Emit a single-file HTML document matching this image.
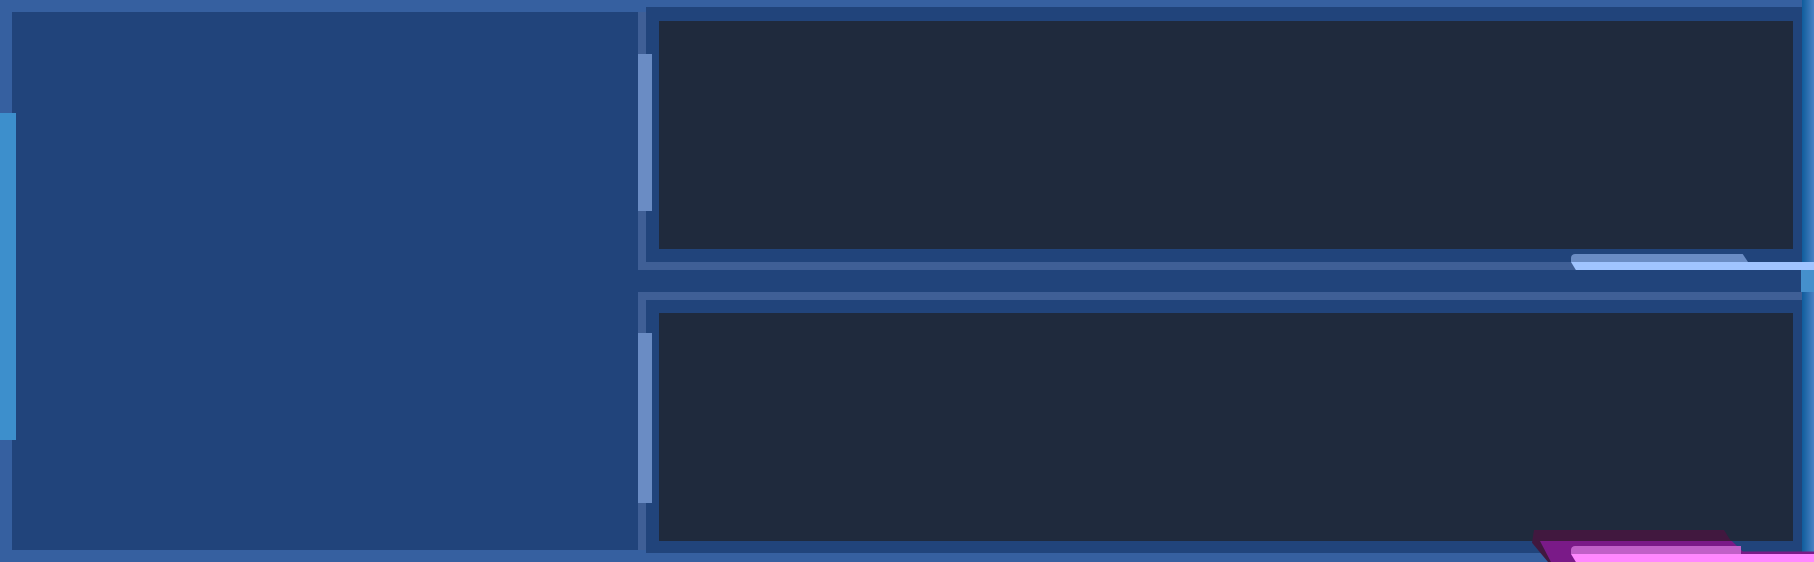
<!DOCTYPE html>
<html><head><style>
body{margin:0;width:1814px;height:562px;overflow:hidden;background:#3660a0;position:relative}
div{position:absolute}
</style></head><body>
<div style="left:12px;top:12px;width:626px;height:538px;background:#21447b"></div>
<div style="left:0;top:113px;width:16px;height:327px;background:#3d8fcc"></div>

<!-- top frame -->
<div style="left:638px;top:12px;width:1176px;height:258px;background:#3f5f96"></div>
<div style="left:646px;top:7px;width:1159px;height:255px;background:#21447b"></div>
<div style="left:659px;top:21px;width:1134px;height:228px;background:#1f2a3d"></div>
<div style="left:638px;top:54px;width:14px;height:157px;background:#6a8cc4"></div>

<!-- mid gap -->
<div style="left:638px;top:270px;width:1176px;height:22px;background:#21447b"></div>

<!-- bottom frame -->
<div style="left:638px;top:292px;width:1176px;height:258px;background:#3f5f96"></div>
<div style="left:646px;top:300px;width:1159px;height:253px;background:#21447b"></div>
<div style="left:659px;top:313px;width:1134px;height:228px;background:#1f2a3d"></div>
<div style="left:638px;top:333px;width:14px;height:170px;background:#6a8cc4"></div>

<!-- right edge -->
<div style="left:1802px;top:0;width:12px;height:562px;background:linear-gradient(90deg,#0f5c9c,#4a82c4)"></div>
<div style="left:1801px;top:262px;width:13px;height:30px;background:#4590cc"></div>

<!-- top tab -->
<div style="left:1571px;top:254px;width:177px;height:8px;background:#6a8cc4;border-radius:4px 0 0 0;clip-path:polygon(0 0,97% 0,100% 100%,0 100%)"></div>
<div style="left:1571px;top:262px;width:243px;height:8px;background:#a0c4ff;clip-path:polygon(0 0,100% 0,100% 100%,2% 100%)"></div>

<!-- bottom magenta tab -->
<div style="left:1532px;top:530px;width:200px;height:32px;background:#41183f;clip-path:polygon(1% 0,96% 0,100% 40%,100% 100%,8% 100%,0 40%)"></div>
<div style="left:1540px;top:541px;width:274px;height:21px;background:#7a1a88;clip-path:polygon(0 0,70% 0,74% 50%,100% 50%,100% 100%,4% 100%)"></div>
<div style="left:1571px;top:546px;width:170px;height:8px;background:#c060c8;border-radius:4px 0 0 0"></div>
<div style="left:1571px;top:554px;width:243px;height:8px;background:#ff88ff;clip-path:polygon(0 0,100% 0,100% 100%,2% 100%)"></div>
</body></html>
